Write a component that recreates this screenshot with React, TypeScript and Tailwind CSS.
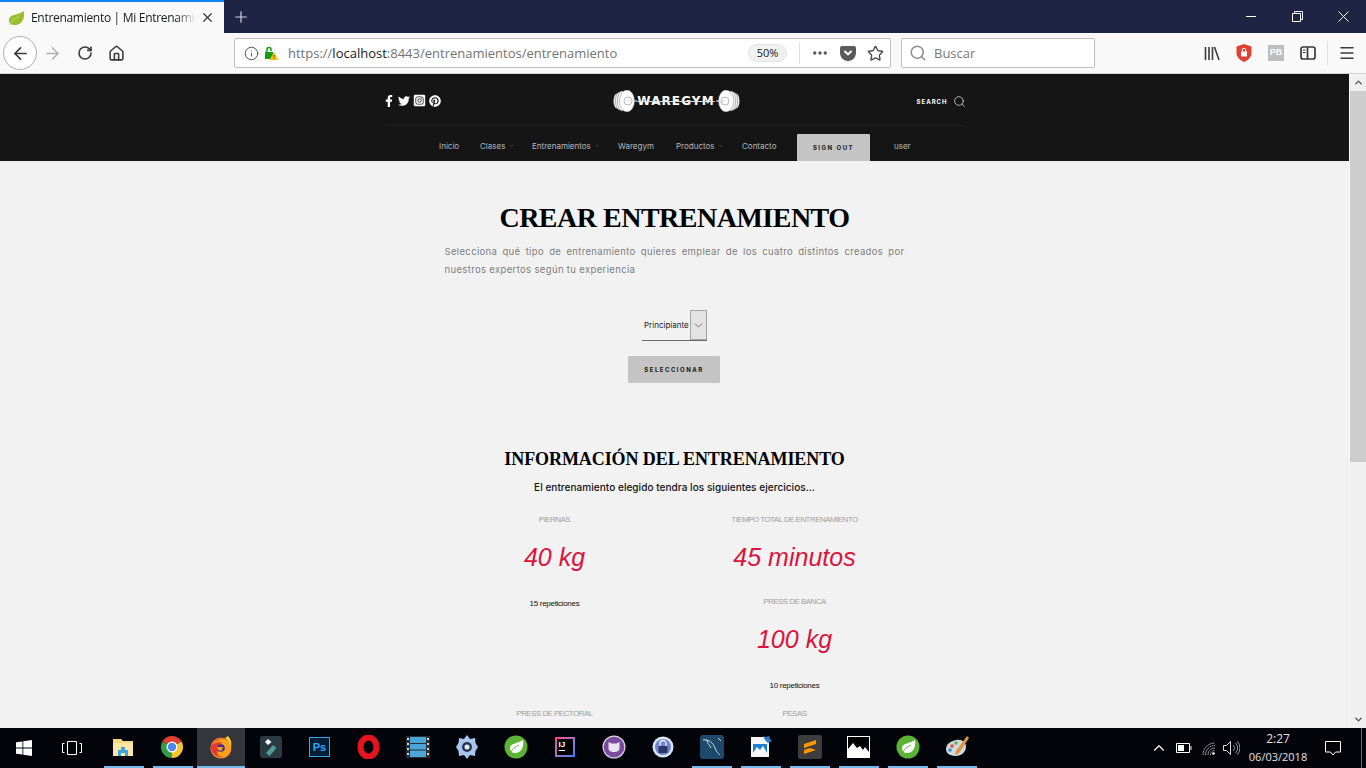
import { ArrowLeft, ArrowRight, ChevronDown, ChevronUp, Home, Info, Menu, MoreHorizontal, Plus, RotateCw, Search, Star, X } from 'lucide-react';
import { FaFacebookF, FaInstagramSquare, FaPinterest, FaTwitter } from 'react-icons/fa';
import type { ReactNode } from 'react';

const uiFont = 'font-["Open_Sans","Noto_Sans",sans-serif]';
const siteFont = 'font-["Inter","Noto_Sans",sans-serif]';
const serifFont = 'font-["Liberation_Serif",serif]';
const arialFont = 'font-["Liberation_Sans",Arial,sans-serif]';
const logoFont = 'font-["DejaVu_Sans",sans-serif]';

const navItems = [
  { label: 'Inicio', w: 'w-[41px]' },
  { label: 'Clases', caret: true, w: 'w-[52px]' },
  { label: 'Entrenamientos', caret: true, w: 'w-[86px]' },
  { label: 'Waregym', w: 'w-[58px]' },
  { label: 'Productos', caret: true, w: 'w-[66px]' },
  { label: 'Contacto', w: 'w-[55px]' }
];

function Leaf({ size = 28 }: { size?: number }) {
  return (
    <svg width={size} height={size} viewBox="0 0 24 24">
      <circle cx="12" cy="12" r="11.5" fill="#5cb335" />
      <path d="M19 5c1 6-1 13-8 13-3 0-5-2-5-5 0-5 7-4 13-8z" fill="#fff" />
      <path d="M6 19c2-5 5-7 9-9" stroke="#5cb335" strokeWidth="1" fill="none" />
    </svg>
  );
}

function Plate({ flip }: { flip?: boolean }) {
  return (
    <svg width="24" height="22" viewBox="0 0 24 22" className={flip ? '-scale-x-100' : ''}>
      <ellipse cx="4" cy="11" rx="3.5" ry="7.5" fill="#e8e8e8" />
      <ellipse cx="6.5" cy="11" rx="4" ry="9" fill="#f2f2f2" stroke="#777" strokeWidth=".5" />
      <ellipse cx="9" cy="11" rx="4.5" ry="10" fill="#f6f6f6" stroke="#777" strokeWidth=".5" />
      <ellipse cx="14" cy="11" rx="7.5" ry="11" fill="#fff" stroke="#888" strokeWidth=".5" />
      <circle cx="15" cy="11" r="4" fill="none" stroke="#aaa" strokeWidth=".8" />
      <rect x="15" y="10.4" width="9" height="1.2" fill="#ddd" />
    </svg>
  );
}

function BrowserChrome() {
  return (
    <div className={`shrink-0 ${uiFont}`}>
      <div className="flex h-[33px] items-stretch bg-[#1f2344]">
        <div className="flex w-[224px] items-center border-t-2 border-[#0a84ff] bg-[#f9f9fa] pl-[8px]">
          <svg width="17" height="16" viewBox="0 0 17 16">
            <path d="M16 1c1 7-2 14-9 14-4 0-7-2-6-6 1-5 10-4 15-8z" fill="#98bf2e" />
            <path d="M1 15c3-5 6-7 10-8" stroke="#c9de73" strokeWidth="1" fill="none" />
          </svg>
          <span className="ml-[6px] w-[165px] overflow-hidden whitespace-nowrap text-[12px] tracking-[-0.3px] text-[#18191a] [mask-image:linear-gradient(to_right,black_88%,transparent)]">
            Entrenamiento | Mi Entrenamiento
          </span>
          <X size={15} strokeWidth={2} className="ml-[4px] text-[#3c3c3c]" />
        </div>
        <div className="flex w-[34px] items-center justify-center">
          <Plus size={18} strokeWidth={1.6} className="text-[#d5d6dc]" />
        </div>
        <div className="ml-auto flex items-center text-white">
          <div className="flex w-[46px] justify-center">
            <div className="h-px w-[10px] bg-white" />
          </div>
          <div className="flex w-[46px] justify-center">
            <svg width="11" height="11" viewBox="0 0 11 11" fill="none" stroke="#fff">
              <path d="M.5 2.5h8v8h-8zM2.5 2.5v-2h8v8h-2" />
            </svg>
          </div>
          <div className="flex w-[46px] justify-center">
            <svg width="11" height="11" viewBox="0 0 11 11" stroke="#fff">
              <path d="M.5.5l10 10M10.5.5l-10 10" />
            </svg>
          </div>
        </div>
      </div>

      <div className="flex h-[41px] items-center border-b border-[#d2d2d4] bg-[#f9f9fa]">
        <div className="ml-[3px] flex h-[34px] w-[34px] items-center justify-center rounded-full border border-[#b1b1b3] bg-white">
          <ArrowLeft size={19} strokeWidth={2.2} className="text-[#3b3b3d]" />
        </div>
        <ArrowRight size={19} strokeWidth={2} className="ml-[6px] text-[#b1b1b3]" />
        <RotateCw size={16} strokeWidth={2.4} className="ml-[15px] text-[#3b3b3d]" />
        <Home size={17} strokeWidth={2.2} className="ml-[15px] text-[#3b3b3d]" />

        <div className="ml-[109px] flex h-[30px] w-[657px] items-center rounded-[2px] border border-[#bebebe] bg-white pl-[9px] pr-[6px]">
          <Info size={15} strokeWidth={1.6} className="text-[#55555a]" />
          <svg width="16" height="16" viewBox="0 0 16 16" className="ml-[4px]">
            <path d="M2 7h8v7H2z" fill="#12a012" />
            <path d="M4 7V4.5a2 2 0 0 1 4 0V6" stroke="#12a012" strokeWidth="1.6" fill="none" />
            <path d="M11 7l4.5 8h-9z" fill="#fbbf24" />
            <path d="M11 10v2.5M11 13.4v.8" stroke="#5a3b00" strokeWidth=".9" />
          </svg>
          <span className="ml-[9px] whitespace-nowrap pt-[2px] text-[13px] text-[#737373]">
            https://<span className="text-[#18191a]">localhost</span>:8443/entrenamientos/entrenamiento
          </span>
          <div className="ml-auto flex h-[18px] w-[39px] items-center justify-center rounded-full border border-[#e4e4e4] bg-[#f0f0f0] text-[11px] text-[#18191a]">
            50%
          </div>
          <div className="ml-[12px] mr-[11px] h-[22px] w-px bg-[#e1e1e2]" />
          <MoreHorizontal size={18} strokeWidth={2.6} className="text-[#55555a]" />
          <svg width="16" height="15" viewBox="0 0 16 15" className="ml-[11px]">
            <path d="M2 0h12a2 2 0 0 1 2 2v5a8 8 0 0 1-16 0V2a2 2 0 0 1 2-2z" fill="#5a5a5e" />
            <path d="M4.5 5L8 8.4 11.5 5" stroke="#fff" strokeWidth="2" fill="none" />
          </svg>
          <Star size={17} strokeWidth={2} className="ml-[11px] text-[#4c4c50]" />
        </div>

        <div className="ml-[10px] flex h-[30px] w-[194px] items-center rounded-[2px] border border-[#bebebe] bg-white pl-[7px]">
          <Search size={18} strokeWidth={2} className="text-[#8f8f91]" />
          <span className="ml-[7px] pt-[2px] text-[13px] text-[#77777a]">Buscar</span>
        </div>

        <svg width="16" height="16" viewBox="0 0 16 16" stroke="#3b3b3d" strokeWidth="1.6" className="ml-[109px]">
          <path d="M1.5 2v13M5 2v13M8.5 2v13M10.5 2l4.5 13" />
        </svg>
        <svg width="16" height="18" viewBox="0 0 16 18" className="ml-[16px]">
          <path d="M8 0l7.5 2.5V9c0 4-3.5 7.5-7.5 9-4-1.5-7.5-5-7.5-9V2.5z" fill="#e0402f" />
          <path d="M5 7.5h6v5H5z" fill="#fff" />
          <path d="M6.3 7.5V6a1.7 1.7 0 0 1 3.4 0v1.5" stroke="#fff" fill="none" />
        </svg>
        <div className={`ml-[16px] flex h-[16px] w-[16px] items-center justify-center bg-[#bdbdbd] text-[9px] font-bold text-white ${arialFont}`}>
          PB
        </div>
        <svg width="16" height="14" viewBox="0 0 16 14" fill="none" stroke="#3b3b3d" strokeWidth="1.7" className="ml-[16px]">
          <rect x="1" y="1" width="14" height="12" rx="2" />
          <path d="M7.5 1v12" />
          <path d="M3 4h2.5M3 6.5h2.5" strokeWidth="1" />
        </svg>
        <div className="ml-[11px] h-[24px] w-px bg-[#e1e1e2]" />
        <Menu size={18} strokeWidth={2} className="ml-[10px] text-[#3b3b3d]" />
      </div>
    </div>
  );
}

function SiteHeader() {
  return (
    <header className={`bg-[#151515] ${siteFont}`}>
      <div className="mx-auto w-[580px]">
        <div className="flex h-[52px] items-center justify-between border-b border-[#1f1f1f] pt-[2px]">
          <div className="flex w-[120px] items-center text-white">
            <FaFacebookF size={12} className="-ml-[2px]" />
            <FaTwitter size={12} className="ml-[3px]" />
            <FaInstagramSquare size={13} className="ml-[3px]" />
            <FaPinterest size={12} className="ml-[3px]" />
          </div>
          <div className="ml-[2px] flex items-center">
            <Plate />
            <span className={`w-[79px] whitespace-nowrap text-center text-[12px] font-bold tracking-[1.1px] text-white line-through decoration-[#ddd] ${logoFont}`}>
              WAREGYM
            </span>
            <Plate flip />
          </div>
          <div className="-mr-px flex w-[120px] items-center justify-end gap-[5px] pt-[2px] text-white">
            <span className="text-[6px] font-bold tracking-[1px]">SEARCH</span>
            <Search size={13} strokeWidth={1.4} className="text-[#ddd]" />
          </div>
        </div>
      </div>
      <nav className="ml-[439px] flex h-[35px] items-center pt-[5px] text-[8px] text-[#b4b9bd]">
        {navItems.map((item) =>
        <a key={item.label} className={`flex shrink-0 items-center whitespace-nowrap ${item.w}`}>
            {item.label}
            {item.caret && <ChevronDown size={6} strokeWidth={2} className="ml-[3px] text-[#666]" />}
          </a>
        )}
        <a className="flex h-[27px] w-[73px] items-center justify-center self-end rounded-t-[1px] bg-[#c4c4c4] text-[6px] font-bold tracking-[1.5px] text-[#151515]">
          SIGN OUT
        </a>
        <a className="ml-[24px]">user</a>
      </nav>
    </header>
  );
}

function Stat({ label, value, reps, className = '' }: { label: string; value?: string; reps?: string; className?: string }) {
  return (
    <div className={`flex flex-col items-center ${arialFont} ${className}`}>
      <div className="h-[10px] whitespace-nowrap text-[8px] leading-[10px] tracking-[-0.55px] text-[#a0a0a0]">{label}</div>
      {value && <div className="mt-[8px] h-[48px] whitespace-nowrap text-[25px] italic leading-[48px] text-[#dc143c]">{value}</div>}
      {reps && <div className="mt-[18px] h-[10px] whitespace-nowrap text-[8px] leading-[10px] tracking-[-0.3px] text-[#111]">{reps}</div>}
    </div>
  );
}

function PageBody() {
  return (
    <main className="flex flex-col items-center pt-[41px]">
      <h1 className={`h-[32px] text-[28px] font-bold leading-[32px] tracking-[-0.5px] text-black ${serifFont}`}>
        CREAR ENTRENAMIENTO
      </h1>
      <p className={`mt-[9px] w-[460px] text-justify text-[9.5px] leading-[18px] tracking-[0.35px] text-[#7d7d7d] ${siteFont}`}>
        Selecciona qué tipo de entrenamiento quieres emplear de los cuatro distintos creados por nuestros expertos según tu experiencia
      </p>

      <div className="mt-[31px] flex h-[31px] w-[65px] items-stretch border-b border-[#6b6b6b]">
        <span className={`flex flex-1 items-center pl-[2px] text-[8px] text-[#222] ${siteFont}`}>Principiante</span>
        <span className="flex w-[17px] items-center justify-center border border-[#a5a5a5] bg-[#e3e3e3]">
          <ChevronDown size={13} strokeWidth={1.2} className="text-[#444]" />
        </span>
      </div>

      <button className={`mr-px mt-[15px] h-[27px] w-[92px] rounded-[1px] bg-[#c4c4c4] text-[6px] font-bold tracking-[1.5px] text-[#151515] ${siteFont}`}>
        SELECCIONAR
      </button>

      <h2 className={`mt-[66px] h-[21px] text-[18px] font-bold leading-[21px] tracking-[-0.08px] text-black ${serifFont}`}>
        INFORMACIÓN DEL ENTRENAMIENTO
      </h2>
      <p className={`mt-[11px] h-[12px] text-[10px] font-medium leading-[12px] tracking-[0.05px] text-[#111] ${siteFont}`}>
        El entrenamiento elegido tendra los siguientes ejercicios...
      </p>

      <div className="mt-[22px] grid w-[480px] grid-cols-2">
        <div className="flex flex-col">
          <Stat label="PIERNAS" value="40 kg" reps="15 repeticiones" className="h-[194px]" />
          <Stat label="PRESS DE PECTORAL" />
        </div>
        <div className="flex flex-col">
          <Stat label="TIEMPO TOTAL DE ENTRENAMIENTO" value="45 minutos" className="h-[82px]" />
          <Stat label="PRESS DE BANCA" value="100 kg" reps="10 repeticiones" className="h-[112px]" />
          <Stat label="PESAS" />
        </div>
      </div>
    </main>
  );
}

function Scrollbar() {
  return (
    <div className="flex w-[17px] shrink-0 flex-col items-center border-l border-[#f8f8f8] bg-[#f0f0f0]">
      <div className="flex h-[17px] items-center justify-center">
        <ChevronUp size={11} strokeWidth={3} className="text-[#505050]" />
      </div>
      <div className="h-[371px] w-full bg-[#cdcdcd]" />
      <div className="mt-auto flex h-[17px] items-center justify-center">
        <ChevronDown size={11} strokeWidth={3} className="text-[#505050]" />
      </div>
    </div>
  );
}

type TaskIcon = { key: string; running?: boolean; active?: boolean; node: ReactNode };

const taskIcons: TaskIcon[] = [
  { key: 'explorer', running: true, node:
    <svg width="22" height="20" viewBox="0 0 22 20" className="mr-[2px]">
      <path d="M1 2h8l2 2h10v15H1z" fill="#f5d77e" />
      <path d="M1 6h20v13H1z" fill="#fbe7a3" />
      <path d="M6 19v-6h3v-3h4v3h3v6h-3v-3H9v3z" fill="#3ba4dd" />
    </svg> },
  { key: 'chrome', running: true, node:
    <svg width="24" height="24" viewBox="0 0 24 24" className="mr-px">
      <path d="M12 12L2.47 6.5A11 11 0 0 1 21.53 6.5z" fill="#e0402f" />
      <path d="M12 12l9.53-5.5A11 11 0 0 1 12 23z" fill="#f7c52c" />
      <path d="M12 12v11A11 11 0 0 1 2.47 6.5z" fill="#2f9e4a" />
      <circle cx="12" cy="12" r="5.5" fill="#fff" />
      <circle cx="12" cy="12" r="4.2" fill="#4a8af0" />
    </svg> },
  { key: 'firefox', running: true, active: true, node:
    <svg width="24" height="24" viewBox="0 0 24 24">
      <circle cx="12" cy="13" r="10.5" fill="#f3702a" />
      <path d="M12 4a9 9 0 0 1 10 8c.5 6-4 11-10 11S2 19 1.5 13C4 7 8 8 12 4z" fill="#f9a21d" />
      <path d="M2 11a10 10 0 0 0 12 11c-6-1-6-4-6-6 2 1 6 0 6-2s-3-2-4-2c0-2 2-4 3-5-5 0-8 1-11 4z" fill="#e5392f" />
      <circle cx="12" cy="13" r="3.8" fill="#4b2a8c" />
      <path d="M19 1c3 3 4 7 3 11-1-4-3-7-6-9z" fill="#fcd02b" />
      <path d="M8 12h6c0 2-2 3-3 3 2 0 3-1 3-1-1 3-6 2-6-2z" fill="#f9a21d" />
    </svg> },
  { key: 'filmora', node:
    <svg width="22" height="22" viewBox="0 0 22 22">
      <rect width="22" height="22" rx="3" fill="#2a3942" />
      <path d="M8 3l3.5 3-3.5 3-3-3z" fill="#fff" />
      <path d="M6 17l7-8 3.5 3-7 8z" fill="#4f9a9a" />
    </svg> },
  { key: 'photoshop', node:
    <div className={`flex h-[20px] w-[21px] items-center justify-center border-[1.5px] border-[#31a8ff] bg-[#001e36] text-[11px] font-bold leading-none text-[#31a8ff] ${arialFont}`}>Ps</div> },
  { key: 'opera', node:
    <svg width="23" height="24" viewBox="0 0 23 24">
      <ellipse cx="11.5" cy="12" rx="8" ry="9.5" fill="none" stroke="#e5141f" strokeWidth="6" />
    </svg> },
  { key: 'film', node:
    <svg width="24" height="22" viewBox="0 0 24 22">
      <rect width="24" height="22" fill="#2b2f33" />
      <rect x="4" y="1" width="16" height="20" fill="#4aa6d6" />
      <path d="M4 7.5h16M4 14h16" stroke="#2b2f33" />
      <path d="M1 2h2v2H1zM1 7h2v2H1zM1 12h2v2H1zM1 17h2v2H1zM21 2h2v2h-2zM21 7h2v2h-2zM21 12h2v2h-2zM21 17h2v2h-2z" fill="#cfd4d8" />
    </svg> },
  { key: 'gear', node:
    <svg width="22" height="24" viewBox="0 0 22 24">
      <path d="M11 0l3 4 5-1 .5 5 2.5 4-2.5 4-.5 5-5-1-3 4-3-4-5 1-.5-5L0 12l2.5-4L3 3l5 1z" fill="#a9c6ef" />
      <circle cx="11" cy="12" r="5" fill="#26354f" />
      <circle cx="11" cy="12" r="2.5" fill="#e5edf8" />
    </svg> },
  { key: 'spring', node: <Leaf size={24} /> },
  { key: 'intellij', node:
    <div className="flex h-[20px] w-[20px] bg-gradient-to-br from-[#fc3a78] to-[#087cfa] p-[2px]">
      <div className={`flex h-full w-full flex-col bg-black pl-[2px] pt-[1px] text-[8px] font-bold leading-[9px] text-white ${arialFont}`}>
        IJ
        <div className="mt-[1px] h-px w-[6px] bg-white" />
      </div>
    </div> },
  { key: 'github', node:
    <svg width="24" height="24" viewBox="0 0 24 24">
      <circle cx="12" cy="12" r="11.5" fill="#d8d4dc" />
      <circle cx="12" cy="12" r="10.3" fill="#7a4a9e" />
      <path d="M6.5 7l3 1.5h5l3-1.5v6c0 3-2.5 4-5.5 4s-5.5-1-5.5-4z" fill="#e9e4ee" />
    </svg> },
  { key: 'keepass', node:
    <svg width="22" height="22" viewBox="0 0 22 22">
      <circle cx="11" cy="11" r="10.5" fill="#dfe4f4" />
      <circle cx="11" cy="11" r="8" fill="#6c83d0" />
      <path d="M8 10V7.5a3 3 0 0 1 6 0V10" stroke="#eef1fb" strokeWidth="1.3" fill="none" />
      <rect x="6.5" y="10" width="9" height="7" rx="1" fill="#2c3769" />
    </svg> },
  { key: 'mysql', running: true, node:
    <svg width="24" height="24" viewBox="0 0 24 24">
      <rect width="24" height="24" rx="3" fill="#1d4a6b" />
      <path d="M3 5c6-1 10 3 12 8s3 5 5 7M7 5c0 4 3 5 4 8M18 3l3 3" stroke="#cfe0ec" strokeWidth="1" fill="none" />
    </svg> },
  { key: 'photo', running: true, node:
    <svg width="24" height="24" viewBox="0 0 24 24">
      <path d="M2 2h14l4 4v16H2z" fill="#f5f5f5" />
      <path d="M4 9h14v9H4z" fill="#1f7fd1" />
      <path d="M4 18l4-6 3 3 3-4 4 7z" fill="#fff" />
      <path d="M14 1l3 1 3-1 1 3 2 2-4 2-3-3z" fill="#2a7fc4" />
    </svg> },
  { key: 'sublime', running: true, node:
    <div className="flex h-[24px] w-[24px] items-center justify-center rounded-[2px] bg-[#3d3d3d]">
      <svg width="14" height="16" viewBox="0 0 14 16">
        <path d="M1 5l12-4v4L1 9zM1 7l12 4L1 15v-4l6-2z" fill="#ff9800" />
      </svg>
    </div> },
  { key: 'picture', running: true, node:
    <svg width="23" height="22" viewBox="0 0 23 22">
      <rect x=".5" y=".5" width="22" height="21" fill="#000" stroke="#fff" />
      <path d="M1 21v-8l5-6 4 5 3-2 3 4 2-3 4 5v5z" fill="#fff" />
    </svg> },
  { key: 'spring2', running: true, node: <Leaf size={24} /> },
  { key: 'paint', running: true, node:
    <svg width="24" height="22" viewBox="0 0 24 22">
      <path d="M11 4c6-1 10 2 10 7s-5 9-10 9c-5 0-10-2-10-7s5-8 10-9z" fill="#cfd8de" />
      <circle cx="7" cy="10" r="1.8" fill="#e04f3a" />
      <circle cx="11" cy="7" r="1.8" fill="#5fb548" />
      <circle cx="5" cy="14" r="1.8" fill="#3f87d8" />
      <path d="M22 0l2 2-10 15-4 2 1-4z" fill="#e2913b" />
    </svg> }
];

function Taskbar() {
  return (
    <footer className={`flex h-[40px] shrink-0 items-stretch bg-[#02040a] ${uiFont}`}>
      <div className="flex w-[48px] items-center justify-center">
        <svg width="16" height="16" viewBox="0 0 16 16" fill="#fff">
          <path d="M0 2.3l6.5-.9v6.2H0zM7.3 1.3L16 0v7.6H7.3zM0 8.4h6.5v6.200L0 13.700zM7.3 8.4H16V16l-8.700-1.300z" />
        </svg>
      </div>
      <div className="flex w-[51px] items-center justify-center pr-[3px]">
        <svg width="20" height="14" viewBox="0 0 20 14" fill="none" stroke="#fff">
          <path d="M5.5.5h9v13h-9zM2.5 2.5H.5v9h2M17.5 2.5h2v9h-2" />
        </svg>
      </div>
      {taskIcons.map((icon) =>
      <div
        key={icon.key}
        className={`flex flex-col items-center ${icon.active ? 'mr-px w-[48px] bg-[#34363b]' : 'w-[49px]'}`}>
          <div className="flex flex-1 items-center justify-center">{icon.node}</div>
          <div className={`h-[2px] ${icon.active ? 'w-full' : 'w-[40px]'} ${icon.running ? 'bg-[#76b9ed]' : ''}`} />
        </div>
      )}
      <div className="ml-auto flex items-center text-white">
        <ChevronUp size={18} strokeWidth={1.5} />
        <svg width="16" height="10" viewBox="0 0 16 10" fill="none" stroke="#fff" className="ml-[8px]">
          <path d="M.5.5h13v9H.5z" />
          <path d="M2 2h6v6H2z" fill="#fff" stroke="none" />
          <path d="M15 3v4" />
        </svg>
        <svg width="14" height="13" viewBox="0 0 14 13" fill="none" stroke="#c9c9c9" className="ml-[10px]">
          <path d="M1 13A12 12 0 0 1 13 1M3.5 13A9.5 9.5 0 0 1 13 3.5M6 13a7 7 0 0 1 7-7M8.5 13A4.5 4.5 0 0 1 13 8.5" strokeDasharray="1.5 .8" />
          <circle cx="11.5" cy="11.5" r="1.3" fill="#fff" stroke="none" />
        </svg>
        <svg width="17" height="14" viewBox="0 0 17 14" fill="none" stroke="#ddd" className="ml-[7px]">
          <path d="M.5 4.5h3l4-4v13l-4-4h-3z" />
          <path d="M10 4a4 4 0 0 1 0 6M12.5 2a7 7 0 0 1 0 10M14.5 .5a10 10 0 0 1 0 13" stroke="#999" />
        </svg>
        <div className="flex w-[76px] flex-col items-center text-[11px] leading-[18px] text-[#e2e2e2]">
          <span className="text-[12px]">2:27</span>
          <span>06/03/2018</span>
        </div>
        <svg width="16" height="15" viewBox="0 0 16 15" fill="none" stroke="#fff" className="ml-[9px]">
          <path d="M.5.5h15V11h-5L8 14l-2.500-3h-5z" />
        </svg>
        <div className="ml-[20px] h-full w-[5px] border-l border-[#6f7072]" />
      </div>
    </footer>
  );
}

export default function App() {
  return (
    <div className="flex h-screen w-full flex-col overflow-hidden bg-[#f2f2f2]">
      <BrowserChrome />
      <div className="flex min-h-0 flex-1">
        <div className="min-w-0 flex-1 overflow-hidden">
          <SiteHeader />
          <PageBody />
        </div>
        <Scrollbar />
      </div>
      <Taskbar />
    </div>
  );
}
